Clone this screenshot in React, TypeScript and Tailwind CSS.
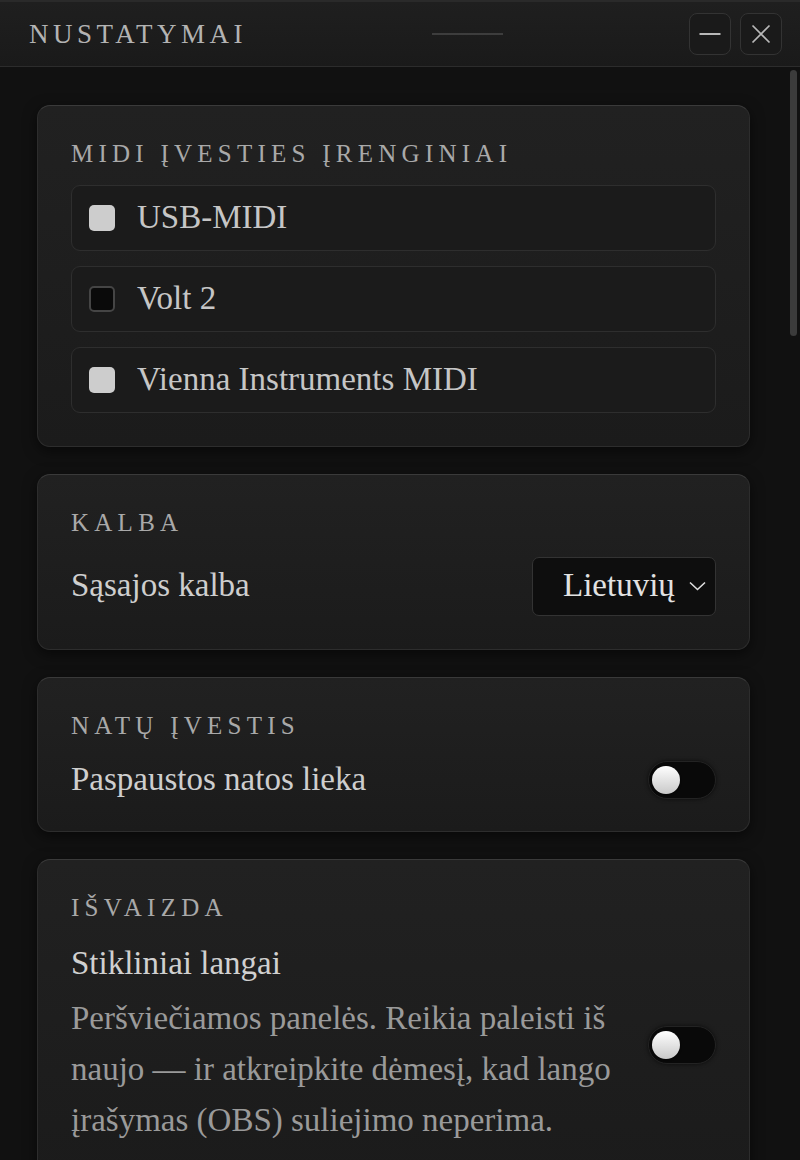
import React from "react";

const serif = "font-['Liberation_Serif',serif]";

function Card({
  title,
  children,
  pb = "pb-[32px]",
}: {
  title: string;
  children: React.ReactNode;
  pb?: string;
}) {
  return (
    <section
      className={`rounded-[13px] border border-[#2d2d2d] border-t-[#3a3a3a] bg-linear-to-b from-[#212121] to-[#1b1b1b] px-[33px] pt-[32px] ${pb} shadow-[0_4px_14px_rgba(0,0,0,0.55)]`}
    >
      <h2 className="text-[25px] leading-[32px] tracking-[0.21em] text-[#a9a9a9] uppercase">
        {title}
      </h2>
      <div className="mt-[15px]">{children}</div>
    </section>
  );
}

function Checkbox({ checked }: { checked: boolean }) {
  return checked ? (
    <span className="block h-[26px] w-[26px] shrink-0 rounded-[5px] bg-[#cdcdcd]" />
  ) : (
    <span className="block h-[26px] w-[26px] shrink-0 rounded-[5px] border-2 border-[#454545] bg-[#0a0a0a]" />
  );
}

function DeviceRow({ label, checked }: { label: string; checked: boolean }) {
  return (
    <div className="flex h-[66px] items-center gap-[22px] rounded-[9px] border border-[#2e2e2e] bg-[#1b1b1b] pl-[17px]">
      <Checkbox checked={checked} />
      <span className="text-[33px] text-[#c6c6c6]">{label}</span>
    </div>
  );
}

function Toggle({ extra = "" }: { extra?: string }) {
  return (
    <div
      className={`flex h-[38px] w-[68px] shrink-0 items-center rounded-full border border-[#232323] bg-[#090909] px-[3px] shadow-[0_0_4px_rgba(0,0,0,0.6)] ${extra}`}
    >
      <span className="block h-[28px] w-[28px] rounded-full bg-linear-to-b from-[#ffffff] to-[#c9c9c9] shadow-[0_1px_2px_rgba(0,0,0,0.6)]" />
    </div>
  );
}

export default function App() {
  return (
    <div className={`${serif} flex h-[1160px] w-[800px] flex-col overflow-hidden bg-[#111111]`}>
      {/* Header */}
      <header className="flex h-[67px] shrink-0 items-center border-t-2 border-b border-t-[#2a2a2a] border-b-[#2c2c2c] bg-linear-to-b from-[#1f1f1f] to-[#1a1a1a] pl-[29px] pr-[18px]">
        <h1 className="text-[27px] tracking-[0.165em] text-[#b3b3b3]">NUSTATYMAI</h1>
        <div className="flex flex-1 justify-center">
          <span className="block h-[2px] w-[71px] bg-[#3d3d3d]" />
        </div>
        <div className="flex gap-[9px]">
          <button className="flex h-[42px] w-[42px] items-center justify-center rounded-[8px] border border-[#333333] bg-[#1a1a1a]">
            <svg width="22" height="4" viewBox="0 0 22 4">
              <line x1="0.5" y1="2" x2="21.5" y2="2" stroke="#b8b8b8" strokeWidth="2" />
            </svg>
          </button>
          <button className="flex h-[42px] w-[42px] items-center justify-center rounded-[8px] border border-[#333333] bg-[#1a1a1a]">
            <svg width="20" height="20" viewBox="0 0 20 20">
              <path d="M1.5 1.5 L18.5 18.5 M18.5 1.5 L1.5 18.5" stroke="#b8b8b8" strokeWidth="1.7" fill="none" />
            </svg>
          </button>
        </div>
      </header>

      {/* Body */}
      <div className="flex min-h-0 flex-1">
        <main className="flex w-[788px] shrink-0 flex-col gap-[27px] pl-[37px] pr-[38px] pt-[38px]">
          <Card title="MIDI įvesties įrenginiai" pb="pb-[33px]">
            <div className="flex flex-col gap-[15px]">
              <DeviceRow label="USB-MIDI" checked />
              <DeviceRow label="Volt 2" checked={false} />
              <DeviceRow label="Vienna Instruments MIDI" checked />
            </div>
          </Card>

          <Card title="Kalba" pb="pb-[31px]">
            <div className="flex h-[64px] items-center justify-between">
              <span className="text-[33px] text-[#cecece]">Sąsajos kalba</span>
              <button className="flex h-[59px] w-[184px] items-center justify-between rounded-[7px] border border-[#333333] bg-[#0e0e0e] pl-[30px] pr-[9px]">
                <span className="text-[33px] text-[#e2e2e2]">Lietuvių</span>
                <svg width="17" height="10" viewBox="0 0 17 10">
                  <polyline points="1,1.5 8.5,8.5 16,1.5" stroke="#dedede" strokeWidth="1.6" fill="none" />
                </svg>
              </button>
            </div>
          </Card>

          <Card title="Natų įvestis" pb="pb-[28px]">
            <div className="flex h-[46px] items-center justify-between">
              <span className="text-[33px] text-[#cecece]">Paspaustos natos lieka</span>
              <Toggle />
            </div>
          </Card>

          <Card title="Išvaizda">
            <div className="flex items-center justify-between">
              <div className="w-[560px]">
                <div className="text-[33px] leading-[48px] text-[#d0d0d0]">Stikliniai langai</div>
                <p className="mt-[6px] text-[33px] leading-[51px] text-[#9a9a9a]">
                  Peršviečiamos panelės. Reikia paleisti iš naujo — ir atkreipkite dėmesį, kad lango
                  įrašymas (OBS) suliejimo neperima.
                </p>
              </div>
              <Toggle extra="mt-[5px]" />
            </div>
          </Card>
        </main>

        {/* Scrollbar */}
        <div className="w-[12px] shrink-0 pl-[2px] pt-[3px]">
          <div className="h-[266px] w-[7px] rounded-full bg-[#3b3b3b]" />
        </div>
      </div>
    </div>
  );
}
